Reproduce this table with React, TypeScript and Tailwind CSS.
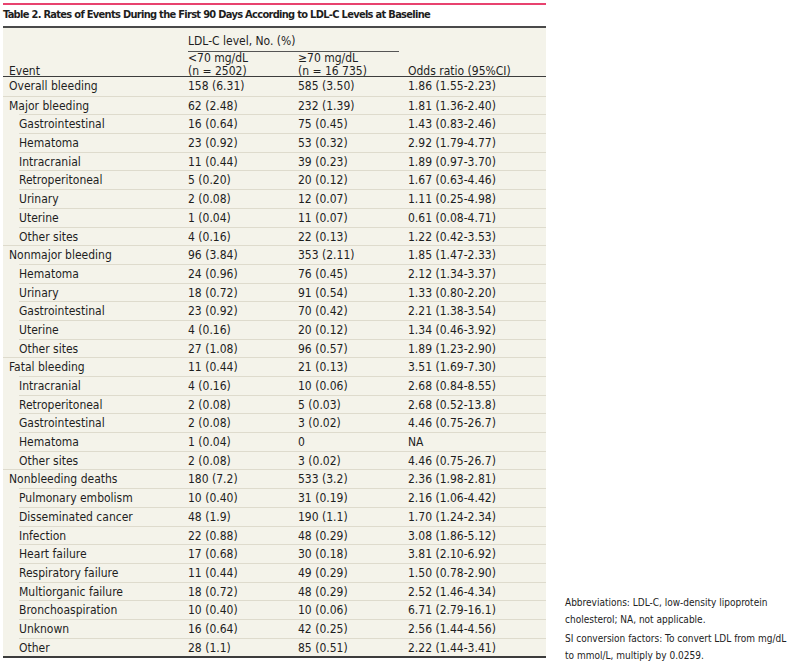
const rows: { label: string; low: string; high: string; or: string; sub?: boolean }[] = [
    { label: "Overall bleeding", low: "158 (6.31)", high: "585 (3.50)", or: "1.86 (1.55-2.23)" },
    { label: "Major bleeding", low: "62 (2.48)", high: "232 (1.39)", or: "1.81 (1.36-2.40)" },
    { label: "Gastrointestinal", low: "16 (0.64)", high: "75 (0.45)", or: "1.43 (0.83-2.46)", sub: true },
    { label: "Hematoma", low: "23 (0.92)", high: "53 (0.32)", or: "2.92 (1.79-4.77)", sub: true },
    { label: "Intracranial", low: "11 (0.44)", high: "39 (0.23)", or: "1.89 (0.97-3.70)", sub: true },
    { label: "Retroperitoneal", low: "5 (0.20)", high: "20 (0.12)", or: "1.67 (0.63-4.46)", sub: true },
    { label: "Urinary", low: "2 (0.08)", high: "12 (0.07)", or: "1.11 (0.25-4.98)", sub: true },
    { label: "Uterine", low: "1 (0.04)", high: "11 (0.07)", or: "0.61 (0.08-4.71)", sub: true },
    { label: "Other sites", low: "4 (0.16)", high: "22 (0.13)", or: "1.22 (0.42-3.53)", sub: true },
    { label: "Nonmajor bleeding", low: "96 (3.84)", high: "353 (2.11)", or: "1.85 (1.47-2.33)" },
    { label: "Hematoma", low: "24 (0.96)", high: "76 (0.45)", or: "2.12 (1.34-3.37)", sub: true },
    { label: "Urinary", low: "18 (0.72)", high: "91 (0.54)", or: "1.33 (0.80-2.20)", sub: true },
    { label: "Gastrointestinal", low: "23 (0.92)", high: "70 (0.42)", or: "2.21 (1.38-3.54)", sub: true },
    { label: "Uterine", low: "4 (0.16)", high: "20 (0.12)", or: "1.34 (0.46-3.92)", sub: true },
    { label: "Other sites", low: "27 (1.08)", high: "96 (0.57)", or: "1.89 (1.23-2.90)", sub: true },
    { label: "Fatal bleeding", low: "11 (0.44)", high: "21 (0.13)", or: "3.51 (1.69-7.30)" },
    { label: "Intracranial", low: "4 (0.16)", high: "10 (0.06)", or: "2.68 (0.84-8.55)", sub: true },
    { label: "Retroperitoneal", low: "2 (0.08)", high: "5 (0.03)", or: "2.68 (0.52-13.8)", sub: true },
    { label: "Gastrointestinal", low: "2 (0.08)", high: "3 (0.02)", or: "4.46 (0.75-26.7)", sub: true },
    { label: "Hematoma", low: "1 (0.04)", high: "0", or: "NA", sub: true },
    { label: "Other sites", low: "2 (0.08)", high: "3 (0.02)", or: "4.46 (0.75-26.7)", sub: true },
    { label: "Nonbleeding deaths", low: "180 (7.2)", high: "533 (3.2)", or: "2.36 (1.98-2.81)" },
    { label: "Pulmonary embolism", low: "10 (0.40)", high: "31 (0.19)", or: "2.16 (1.06-4.42)", sub: true },
    { label: "Disseminated cancer", low: "48 (1.9)", high: "190 (1.1)", or: "1.70 (1.24-2.34)", sub: true },
    { label: "Infection", low: "22 (0.88)", high: "48 (0.29)", or: "3.08 (1.86-5.12)", sub: true },
    { label: "Heart failure", low: "17 (0.68)", high: "30 (0.18)", or: "3.81 (2.10-6.92)", sub: true },
    { label: "Respiratory failure", low: "11 (0.44)", high: "49 (0.29)", or: "1.50 (0.78-2.90)", sub: true },
    { label: "Multiorganic failure", low: "18 (0.72)", high: "48 (0.29)", or: "2.52 (1.46-4.34)", sub: true },
    { label: "Bronchoaspiration", low: "10 (0.40)", high: "10 (0.06)", or: "6.71 (2.79-16.1)", sub: true },
    { label: "Unknown", low: "16 (0.64)", high: "42 (0.25)", or: "2.56 (1.44-4.56)", sub: true },
    { label: "Other", low: "28 (1.1)", high: "85 (0.51)", or: "2.22 (1.44-3.41)", sub: true },
];

const font = { fontFamily: '"DejaVu Sans Condensed", "Liberation Sans", sans-serif' };

export default function App() {
    return (
        <div className="w-[810px] min-h-[662px] bg-white text-[#1e1e1e] pl-[3px] pb-[1px] flex items-end gap-[19px]" style={font}>
            <div className="w-[543px] flex flex-col self-start">
                <div className="mt-[3px] h-[2px] bg-[#e8436f]" />
                <div className="h-[21px] flex items-center text-[11px] font-bold tracking-[-0.7px] whitespace-nowrap">
                    Table 2. Rates of Events During the First 90 Days According to LDL-C Levels at Baseline
                </div>
                <div className="h-[2px] bg-[#4a4a4a]" />
                <div className="bg-[#f4f3ea]">
                    <div className="grid grid-cols-[185px_110px_110px_1fr] h-[49px] text-[12px] leading-[13px] border-b-[1.5px] border-[#3c3c3c]">
                        <div className="pl-[6px] flex items-end">Event</div>
                        <div className="col-span-2 flex flex-col justify-between pt-[7px]">
                            <div className="w-[211px] border-b border-[#555] pb-[3px]">LDL-C level, No. (%)</div>
                            <div className="grid grid-cols-[110px_110px]">
                                <div>
                                    <div>&lt;70 mg/dL</div>
                                    <div>(n = 2502)</div>
                                </div>
                                <div>
                                    <div>≥70 mg/dL</div>
                                    <div>(n = 16 735)</div>
                                </div>
                            </div>
                        </div>
                        <div className="flex items-end">Odds ratio (95%CI)</div>
                    </div>
                    {rows.map((r, i) => (
                        <div key={i} className={r.sub ? "pl-[16px]" : ""}>
                            <div
                                className={
                                    "grid h-[18.7px] items-center text-[12px] " +
                                    (i === 0 ? "" : "border-t border-[#dedbcd] ") +
                                    (r.sub ? "grid-cols-[169px_110px_110px_1fr]" : "grid-cols-[185px_110px_110px_1fr]")
                                }
                            >
                                <div className={r.sub ? "" : "pl-[6px]"}>{r.label}</div>
                                <div>{r.low}</div>
                                <div>{r.high}</div>
                                <div>{r.or}</div>
                            </div>
                        </div>
                    ))}
                </div>
                <div className="h-[1.5px] bg-[#3c3c3c]" />
            </div>
            <div className="w-[232px] text-[10px] leading-[17px] text-[#222] flex flex-col gap-[2px] mb-[-3px]">
                <p>Abbreviations: LDL-C, low-density lipoprotein cholesterol; NA, not applicable.</p>
                <p>SI conversion factors: To convert LDL from mg/dL to mmol/L, multiply by 0.0259.</p>
            </div>
        </div>
    );
}
